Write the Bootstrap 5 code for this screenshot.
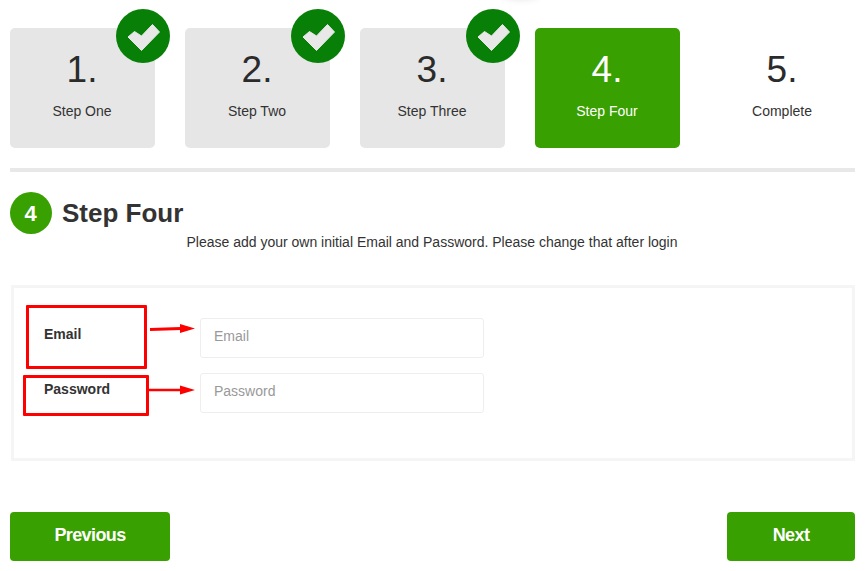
<!DOCTYPE html>
<html lang="en">
<head>
    <meta charset="UTF-8">
    <meta name="viewport" content="width=device-width, initial-scale=1.0">
    <title>Step Four</title>
    <link href="https://cdn.jsdelivr.net/npm/bootstrap@5.3.0/dist/css/bootstrap.min.css" rel="stylesheet">
    <style>
        body {
            font-family: "Liberation Sans", Arial, sans-serif;
            color: #333;
            background: #fff;
        }
        .wizard-page {
            padding: 28px 13px 0 10px;
            width: 868px;
            height: 571px;
            overflow: hidden;
            position: relative;
        }
        .top-smudge {
            position: absolute;
            left: 503px;
            top: -12px;
            width: 36px;
            height: 10px;
            border-radius: 50%;
            box-shadow: 0 0 8px rgba(0, 0, 0, .16);
        }
        .step-list {
            gap: 30px;
            padding-bottom: 20px;
            border-bottom: 4px solid #e8e8e8;
        }
        .step-box {
            width: 145px;
            height: 120px;
            border-radius: 5px;
            padding-top: 21px;
            padding-right: 1px;
            text-align: center;
            background: #e6e6e6;
            position: relative;
        }
        .step-box.is-active {
            background: #38a000;
            color: #fff;
        }
        .step-box.is-todo {
            background: transparent;
        }
        .step-num {
            font-size: 37px;
            line-height: 42px;
            color: #2b2b2b;
        }
        .is-active .step-num {
            color: #fff;
        }
        .step-name {
            font-size: 14px;
            line-height: 20px;
            margin-top: 10px;
        }
        .step-check {
            position: absolute;
            top: -19px;
            right: -15px;
            width: 54px;
            height: 54px;
        }
        .title-row {
            margin-top: 20px;
            gap: 10px;
        }
        .title-badge {
            width: 42px;
            height: 42px;
            border-radius: 50%;
            background: #38a000;
            color: #fff;
            font-size: 22px;
            font-weight: 700;
            padding-right: 1px;
        }
        .title-text {
            font-size: 26px;
            font-weight: 700;
            line-height: 42px;
            margin: 0;
        }
        .title-note {
            font-size: 14px;
            line-height: 16px;
            margin: 0;
            text-align: center;
            padding-right: 1px;
        }
        .form-panel {
            margin-top: 35px;
            margin-left: 1px;
            height: 176px;
            border: 3px solid #f5f5f5;
            padding: 30px 0 0 30px;
            position: relative;
        }
        .form-line {
            height: 40px;
            margin-bottom: 15px;
        }
        .form-name {
            width: 156px;
            font-size: 14px;
            font-weight: 700;
            line-height: 16px;
            margin: 0;
        }
        .form-line-email .form-name {
            padding-bottom: 8px;
        }
        .form-line-pass .form-name {
            padding-bottom: 9px;
        }
        .form-field.form-control {
            width: 284px;
            height: 40px;
            border: 1px solid #eee;
            border-radius: 3px;
            font-size: 14px;
            padding: 0 13px 4px;
            color: #333;
        }
        .form-field::placeholder {
            color: #999;
        }
        .mark-box {
            position: absolute;
            border: 3px solid #f00;
            border-radius: 1px;
        }
        .mark-email {
            left: 12px;
            top: 17px;
            width: 121px;
            height: 64px;
        }
        .mark-pass {
            left: 9px;
            top: 87px;
            width: 126px;
            height: 41px;
        }
        .mark-arrow {
            position: absolute;
            width: 48px;
            height: 12px;
        }
        .arrow-email {
            left: 135px;
            top: 35px;
        }
        .arrow-pass {
            left: 135px;
            top: 96px;
        }
        .actions-row {
            margin-top: 51px;
        }
        .wizard-btn.btn {
            height: 49px;
            border: 0;
            border-radius: 4px;
            background: #38a000;
            color: #fff;
            font-size: 18px;
            font-weight: 700;
            letter-spacing: -0.6px;
            padding: 0 0 3px;
        }
        .btn-prev {
            width: 160px;
        }
        .btn-next {
            width: 128px;
        }
    </style>
</head>
<body>
    <div class="wizard-page">
        <div class="top-smudge"></div>

        <!-- Steps -->
        <div class="d-flex step-list">
            <div class="step-box">
                <div class="step-num">1.</div>
                <div class="step-name">Step One</div>
                <svg class="step-check" viewBox="0 0 54 54"><circle cx="27" cy="27" r="27" fill="#088008"/><path d="M12 28 L18.500 22.500 L25.500 27 L36.500 15.500 L43.500 23 L25.500 41.500 Z" fill="#e8e8e8" stroke="#e8e8e8" stroke-linejoin="round"/></svg>
            </div>
            <div class="step-box">
                <div class="step-num">2.</div>
                <div class="step-name">Step Two</div>
                <svg class="step-check" viewBox="0 0 54 54"><circle cx="27" cy="27" r="27" fill="#088008"/><path d="M12 28 L18.500 22.500 L25.500 27 L36.500 15.500 L43.500 23 L25.500 41.500 Z" fill="#e8e8e8" stroke="#e8e8e8" stroke-linejoin="round"/></svg>
            </div>
            <div class="step-box">
                <div class="step-num">3.</div>
                <div class="step-name">Step Three</div>
                <svg class="step-check" viewBox="0 0 54 54"><circle cx="27" cy="27" r="27" fill="#088008"/><path d="M12 28 L18.500 22.500 L25.500 27 L36.500 15.500 L43.500 23 L25.500 41.500 Z" fill="#e8e8e8" stroke="#e8e8e8" stroke-linejoin="round"/></svg>
            </div>
            <div class="step-box is-active">
                <div class="step-num">4.</div>
                <div class="step-name">Step Four</div>
            </div>
            <div class="step-box is-todo">
                <div class="step-num">5.</div>
                <div class="step-name">Complete</div>
            </div>
        </div>

        <!-- Title -->
        <div class="d-flex align-items-center title-row">
            <span class="d-flex align-items-center justify-content-center title-badge">4</span>
            <h2 class="title-text">Step Four</h2>
        </div>
        <p class="title-note">Please add your own initial Email and Password. Please change that after login</p>

        <!-- Form -->
        <form class="form-panel">
            <div class="d-flex align-items-center form-line form-line-email">
                <label class="form-name" for="email">Email</label>
                <input type="text" id="email" class="form-control form-field" placeholder="Email">
            </div>
            <div class="d-flex align-items-center form-line form-line-pass">
                <label class="form-name" for="password">Password</label>
                <input type="password" id="password" class="form-control form-field" placeholder="Password">
            </div>
            <!-- red annotations -->
            <div class="mark-box mark-email"></div>
            <div class="mark-box mark-pass"></div>
            <svg class="mark-arrow arrow-email" viewBox="0 0 48 12"><path d="M1 6.500 L32 5.500" stroke="#f00" stroke-width="3"/><path d="M31 1 L46 5.500 L31 10 Z" fill="#f00"/></svg>
            <svg class="mark-arrow arrow-pass" viewBox="0 0 48 12"><path d="M0 6 L32 6" stroke="#f00" stroke-width="2.500"/><path d="M31 1.500 L46 6 L31 10.500 Z" fill="#f00"/></svg>
        </form>

        <!-- Buttons -->
        <div class="d-flex justify-content-between actions-row">
            <button type="button" class="btn wizard-btn btn-prev">Previous</button>
            <button type="button" class="btn wizard-btn btn-next">Next</button>
        </div>
    </div>

    <script src="https://cdn.jsdelivr.net/npm/bootstrap@5.3.0/dist/js/bootstrap.bundle.min.js"></script>
</body>
</html>
